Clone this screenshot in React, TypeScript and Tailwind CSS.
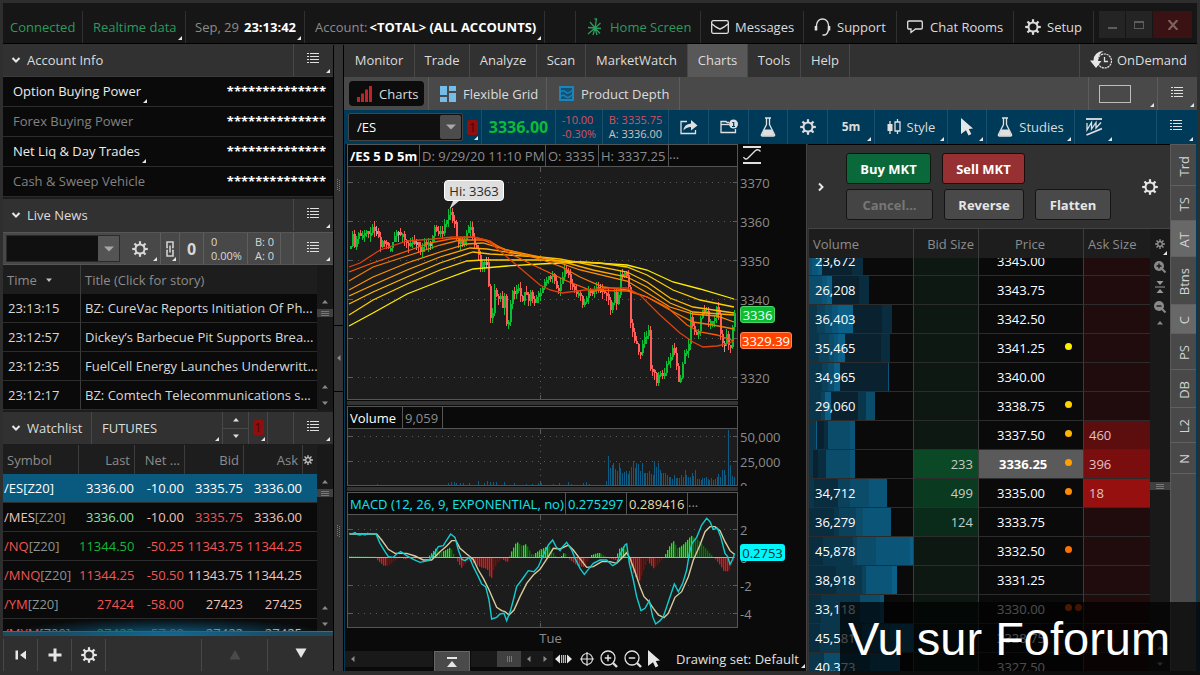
import React from 'react';
import { clsx } from 'clsx';

type Kids = { children?: React.ReactNode; className?: string };

const Corner = ({ className = 'right-[3px] bottom-[3px]' }: { className?: string }) => (
  <svg className={clsx('absolute size-1', className)} viewBox="0 0 4 4" aria-hidden="true">
    <path d="M4 0V4H0Z" fill="#e6e6e6" />
  </svg>
);

const Tri = ({ dir, className = 'text-[#8a8a8a]' }: { dir: 'up' | 'down' | 'left'; className?: string }) => (
  <svg className={clsx('h-1.5 w-2 shrink-0', className)} viewBox="0 0 8 6" fill="currentColor" aria-hidden="true">
    {dir === 'up' && <path d="M4 1L7 4.500H1Z" />}
    {dir === 'down' && <path d="M4 5L7 1.500H1Z" />}
    {dir === 'left' && <path d="M2 3L5.500 0V6Z" />}
  </svg>
);

const Gear = ({ className = 'size-4', hole = 3.6 }: { className?: string; hole?: number }) => (
  <svg className={className} viewBox="0 0 16 16" fill="none" stroke="currentColor" aria-hidden="true">
    <circle cx="8" cy="8" r={hole + 0.9} strokeWidth="2" />
    {[0, 45, 90, 135, 180, 225, 270, 315].map((a) => (
      <path key={a} d="M8 3.200V0.200" strokeWidth="2.200" transform={`rotate(${a} 8 8)`} />
    ))}
  </svg>
);

const ListIcon = () => (
  <svg className="h-2.5 w-3" viewBox="0 0 12 10" fill="#e0e0e0" shapeRendering="crispEdges" aria-hidden="true">
    {[0, 3, 6, 9].map((y) => (
      <g key={y}>
        <rect x="0" y={y} width="2" height="1" />
        <rect x="3" y={y} width="9" height="1" />
      </g>
    ))}
  </svg>
);

const Chevron = ({ className = '' }: { className?: string }) => (
  <svg className={clsx('h-2 w-2.5', className)} viewBox="0 0 10 8" fill="none" stroke="#e6e6e6" strokeWidth="2" aria-hidden="true">
    <path d="M1.500 2L5 5.500L8.500 2" />
  </svg>
);

const Flask = () => (
  <svg className="h-5 w-4" viewBox="0 0 16 20" aria-hidden="true">
    <path d="M5 1H11M6.500 1V7.500L1.500 17.500Q1 19 2.500 19H13.500Q15 19 14.500 17.500L9.500 7.500V1" fill="none" stroke="#e0e0e0" strokeWidth="1.300" />
    <path d="M4.300 12.500H11.700L14.500 18.700H1.500Z" fill="#e0e0e0" />
  </svg>
);

const Pointer = () => (
  <svg className="h-[18px] w-3" viewBox="0 0 12 18" fill="#e6e6e6" aria-hidden="true">
    <path d="M0 0L12 10.500L7.800 11L10.300 16L7.500 17.500L5 12.300L0 16Z" />
  </svg>
);

const Magnifier = ({ plus, className = 'size-[18px]' }: { plus?: boolean; className?: string }) => (
  <svg className={className} viewBox="0 0 18 18" fill="none" stroke="currentColor" aria-hidden="true">
    <circle cx="8" cy="8" r="7" strokeWidth="1.300" />
    <path d="M4.800 8H11.200" strokeWidth="1.500" />
    {plus && <path d="M8 4.800V11.200" strokeWidth="1.500" />}
    <path d="M13 13L17 17" strokeWidth="2.400" />
  </svg>
);

const SolidMagnifier = ({ plus }: { plus?: boolean }) => (
  <svg className="size-3" viewBox="0 0 12 12" aria-hidden="true">
    <circle cx="5" cy="5" r="5" fill="#8a8a8a" />
    <path d="M8 8L11.500 11.500" stroke="#8a8a8a" strokeWidth="2" />
    <path d={plus ? 'M2.500 5H7.500M5 2.500V7.500' : 'M2.500 5H7.500'} stroke="#191919" strokeWidth="1.400" />
  </svg>
);

const LinkBadge = () => (
  <button type="button" aria-label="Link colour 1" className="flex h-[15px] w-[11px] items-center justify-center rounded-xs bg-[#8f0f0f] text-[13px] text-[#4a0606]">
    1
  </button>
);

const MenuCell = ({ className = 'border-[#484848]' }: { className?: string }) => (
  <button type="button" aria-label="Panel menu" className={clsx('relative flex w-10 shrink-0 items-center justify-center border-l pr-0.5 pb-1', className)}>
    <ListIcon />
    <Corner />
  </button>
);

/* ---------- top bar ---------- */

const TopCell = ({ children, className = '' }: Kids) => (
  <div className={clsx('relative flex shrink-0 items-center border-r border-[#303030] whitespace-pre', className)}>{children}</div>
);

function TopBar() {
  return (
    <header className="flex h-[41px] shrink-0 border-b border-black bg-[#161616] pt-2">
      <TopCell className="w-20 pl-[7px] text-[#2b9a5c]">Connected</TopCell>
      <TopCell className="w-[103px] pl-2.5 text-[#2b9a5c]">Realtime data<Corner /></TopCell>
      <TopCell className="w-[119px] gap-[5px] pl-[9px] text-[#8c8c8c]">
        Sep, 29<time className="font-bold text-white">23:13:42</time>
        <Corner />
      </TopCell>
      <TopCell className="w-60 gap-0.5 pl-2.5 text-[#8c8c8c]">
        Account:<b className="font-bold text-white">&lt;TOTAL&gt; (ALL ACCOUNTS)</b>
        <Corner />
      </TopCell>
      <TopCell className="min-w-0 flex-1" />
      <TopCell className="w-[125px] text-[#2b9a5c]">
        <button type="button" className="flex items-center gap-2 pl-[11px]">
          <svg className="h-[18px] w-[15px]" viewBox="0 0 15 18" fill="none" stroke="#2b9a5c" strokeWidth="1.300" aria-hidden="true">
            <path d="M8 10L9.500 1L7.500 1M8 10L3 4M8 10L1 9.500M8 10L1 16M8 10L6 17M8 10L10 17M8 10L13 15.500M8 10L14 10.500M8 10L13.500 5" />
          </svg>
          Home Screen
        </button>
      </TopCell>
      <TopCell className="w-[103px] text-[#dcdcdc]">
        <button type="button" className="flex items-center gap-1.5 pl-2.5">
          <svg className="h-3.5 w-[18px]" viewBox="0 0 18 14" fill="none" stroke="#e0e0e0" strokeWidth="1.300" aria-hidden="true">
            <rect x="0.700" y="0.700" width="16.600" height="12.600" rx="1.500" />
            <path d="M1 4Q5 7.500 9 9.200Q13 7.500 17 4" />
          </svg>
          Messages
        </button>
      </TopCell>
      <TopCell className="w-[93px] text-[#dcdcdc]">
        <button type="button" className="flex items-center gap-1.5 pl-2.5">
          <svg className="h-[18px] w-[17px]" viewBox="0 0 17 18" fill="none" stroke="#e0e0e0" strokeWidth="1.300" aria-hidden="true">
            <path d="M2.500 8V7Q3.500 1 8.500 1T14.500 7V8M8.500 17H11Q13.500 16 14.500 12" />
            <path d="M2 8V12.500M15 8V12.500" strokeWidth="2.600" />
          </svg>
          Support
        </button>
      </TopCell>
      <TopCell className="w-[117px] text-[#dcdcdc]">
        <button type="button" className="flex items-center gap-[7px] pl-2.5">
          <svg className="h-3.5 w-4" viewBox="0 0 16 14" fill="none" stroke="#e0e0e0" strokeWidth="1.300" aria-hidden="true">
            <path d="M2 1H14Q15.300 1 15.300 2.300V7.700Q15.300 9 14 9H8.500L4 12.500V9H2Q0.700 9 0.700 7.700V2.300Q0.700 1 2 1Z" />
          </svg>
          Chat Rooms
        </button>
      </TopCell>
      <TopCell className="w-20 text-[#dcdcdc]">
        <button type="button" className="flex items-center gap-1.5 pl-[11px]">
          <Gear />
          Setup
        </button>
      </TopCell>
      <div className="flex h-[27px] shrink-0 gap-px px-[5px]">
        <button type="button" aria-label="Minimize" className="flex w-[26px] items-center justify-center bg-[#242424]">
          <span className="mt-1.5 h-0.5 w-[9px] bg-[#5c5c5c]" />
        </button>
        <button type="button" aria-label="Maximize" className="flex w-[26px] items-center justify-center bg-[#242424]">
          <span className="h-2 w-2.5 border border-t-2 border-[#5c5c5c]" />
        </button>
        <button type="button" aria-label="Close" className="flex w-[39px] items-center justify-center bg-[#3b1214]">
          <svg className="size-2.5" viewBox="0 0 10 10" stroke="#7c6262" strokeWidth="2.200" aria-hidden="true">
            <path d="M0.500 0L9.500 10M9.500 0L0.500 10" />
          </svg>
        </button>
      </div>
    </header>
  );
}

/* ---------- left column ---------- */

const SectionTitle = ({ children, className = 'flex-1' }: Kids) => (
  <h2 className={clsx('flex items-center', className)}>
    <button type="button" className="flex items-center gap-1.5 pl-2 text-[#dcdcdc]">
      <Chevron />
      {children}
    </button>
  </h2>
);

const accountRows = [
  { name: 'Option Buying Power', active: true },
  { name: 'Forex Buying Power', active: false },
  { name: 'Net Liq & Day Trades', active: true },
  { name: 'Cash & Sweep Vehicle', active: false },
];

const newsRows = [
  ['23:13:15', 'BZ: CureVac Reports Initiation Of Ph...'],
  ['23:12:57', 'Dickey’s Barbecue Pit Supports Brea...'],
  ['23:12:35', 'FuelCell Energy Launches Underwritt...'],
  ['23:12:17', 'BZ: Comtech Telecommunications s...'],
];

const R = 'text-[#f25555]';
const P = 'text-[#efc4bc]';
const W = 'text-white';
const watchRows = [
  { sym: '/ES', symC: W, cells: [['3336.00', W], ['-10.00', W], ['3335.75', W], ['3336.00', W]] },
  { sym: '/MES', symC: P, cells: [['3336.00', 'text-[#8fe0a8]'], ['-10.00', P], ['3335.75', R], ['3336.00', P]] },
  { sym: '/NQ', symC: R, cells: [['11344.50', 'text-[#12b83c]'], ['-50.25', R], ['11343.75', R], ['11344.25', R]] },
  { sym: '/MNQ', symC: R, cells: [['11344.25', R], ['-50.50', R], ['11343.75', P], ['11344.25', P]] },
  { sym: '/YM', symC: R, cells: [['27424', R], ['-58.00', R], ['27423', P], ['27425', P]] },
  { sym: '/MYM', symC: R, cells: [['27422', 'text-[#12b83c]'], ['-57.00', R], ['27422', P], ['27425', P]] },
];

const Scroller = () => (
  <div className="flex w-4 shrink-0 flex-col items-center bg-[#191919] pt-[34px]" aria-hidden="true">
    <Tri dir="up" />
    <div className="mt-1 flex h-2 w-4 flex-col items-center justify-center gap-px bg-[#404040]">
      <span className="h-px w-2 bg-[#777]" />
      <span className="h-px w-2 bg-[#777]" />
      <span className="h-px w-2 bg-[#777]" />
    </div>
    <span className="flex-1" />
    <Tri dir="up" />
    <Tri dir="down" className="mt-2.5 mb-1 text-[#8a8a8a]" />
  </div>
);

function LeftColumn() {
  return (
    <aside className="flex w-[330px] shrink-0 flex-col">
      <section>
        <div className="flex h-[33px] border-b border-[#3c3c3c] bg-[#313131]">
          <SectionTitle>Account Info</SectionTitle>
          <MenuCell />
        </div>
        <dl className="bg-[#0a0a0a]">
          {accountRows.map((r) => (
            <div key={r.name} className="flex h-[30px] items-center justify-between border-b border-[#2c2c2c] pr-[7px] pb-0.5 pl-[9px] whitespace-nowrap">
              <dt className={clsx('relative px-px', r.active ? 'text-[#ececec]' : 'text-[#828282]')}>
                {r.name}
                {r.active && <Corner className="-right-[5px] -bottom-[3px]" />}
              </dt>
              <dd className="font-bold text-white">**************</dd>
            </div>
          ))}
        </dl>
      </section>

      <section className="border-t-2 border-[#1c1c1c]">
        <div className="flex h-[33px] bg-[#313131] pb-px">
          <SectionTitle>Live News</SectionTitle>
          <MenuCell />
        </div>
        <div className="flex h-[33px] border-y border-[#565656] bg-[#484848] text-[#d8d8d8]">
          <div className="my-0.5 ml-[3px] flex w-[114px] border border-[#2a2a2a] bg-[#101010]">
            <input aria-label="News symbol" className="w-[91px] bg-transparent px-1 outline-none" />
            <button type="button" aria-label="Symbol list" className="flex flex-1 items-center justify-center bg-[#545454]">
              <svg className="h-1.5 w-2.5" viewBox="0 0 10 6" fill="#a8a8a8" aria-hidden="true"><path d="M0 0.500H10L5 5.500Z" /></svg>
            </button>
          </div>
          <button type="button" aria-label="News settings" className="relative flex flex-1 items-center justify-center border-r border-[#5e5e5e]">
            <Gear />
            <Corner />
          </button>
          <button type="button" aria-label="Link" className="relative flex w-[19px] items-center justify-center border-r border-[#5e5e5e]">
            <svg className="h-4 w-2" viewBox="0 0 8 16" fill="none" stroke="#d0d0d0" strokeWidth="1.600" aria-hidden="true">
              <path d="M2 6.500H1V1H7V6.500H6M2 9.500H1V15H7V9.500H6M4 4.500V11.500" />
            </svg>
            <Corner />
          </button>
          <div className="flex w-6 items-center justify-center border-r border-[#5e5e5e] text-base font-bold">0</div>
          <div className="w-11 border-r border-[#5e5e5e] pt-0.5 pl-[7px] text-[11px] leading-[14px]">0<br />0.00%</div>
          <div className="w-[33px] border-r border-[#5e5e5e] pt-0.5 pl-[7px] text-[11px] leading-[14px] whitespace-nowrap">B: 0<br />A: 0</div>
          <div className="w-3" />
          <MenuCell className="border-[#5e5e5e]" />
        </div>
        <div className="flex">
          <div className="min-w-0 flex-1">
            <table className="w-full table-fixed border-separate border-spacing-0 bg-[#0a0a0a] text-left">
              <colgroup><col className="w-[78px]" /><col /></colgroup>
              <thead className="bg-[#1d1d1d] text-[#8c8c8c]">
                <tr className="h-[29px]">
                  <th className="border-r border-[#3c3c3c] p-0 pl-1 font-normal">
                    <span className="flex items-center gap-2">Time<Tri dir="down" className="text-[#c0c0c0]" /></span>
                  </th>
                  <th className="p-0 pl-1 font-normal">Title (Click for story)</th>
                </tr>
              </thead>
              <tbody className="text-[#d8d8d8]">
                {newsRows.map(([t, h]) => (
                  <tr key={t} className="h-[29px]">
                    <td className="border-r border-b border-[#2c2c2c] border-r-[#3c3c3c] p-0 pl-[5px]">{t}</td>
                    <td className="border-b border-[#2c2c2c] p-0 pl-1 whitespace-nowrap">{h}</td>
                  </tr>
                ))}
              </tbody>
            </table>
          </div>
          <Scroller />
        </div>
      </section>

      <section className="flex min-h-0 flex-1 flex-col border-t-2 border-[#1c1c1c]">
        <div className="flex h-[33px] shrink-0 border-b border-[#1c1c1c] bg-[#313131]">
          <SectionTitle className="w-[88px]">Watchlist</SectionTitle>
          <button type="button" className="relative flex-1 border-l border-[#484848] pl-2.5 text-left text-[#dcdcdc]">FUTURES<Corner /></button>
          <div className="flex w-[27px] flex-col border-x border-[#484848]">
            <button type="button" aria-label="Previous list" className="flex flex-1 items-center justify-center border-b border-[#484848]"><Tri dir="up" className="text-[#e0e0e0]" /></button>
            <button type="button" aria-label="Next list" className="flex flex-1 items-center justify-center"><Tri dir="down" className="text-[#e0e0e0]" /></button>
          </div>
          <div className="relative flex w-[19px] items-center justify-center border-r border-[#484848] pb-0.5"><LinkBadge /><Corner className="right-0.5 bottom-[3px]" /></div>
          <div className="w-[25px]" />
          <MenuCell />
        </div>
        <div className="flex min-h-0 flex-1 overflow-hidden">
          <div className="min-w-0 flex-1">
            <table className="w-full table-fixed border-separate border-spacing-0 bg-[#0a0a0a] text-right">
              <colgroup>
                <col className="w-[76px]" /><col className="w-14" /><col className="w-[50px]" /><col className="w-[59px]" /><col className="w-[59px]" /><col />
              </colgroup>
              <thead className="bg-[#1d1d1d] text-[#8c8c8c]">
                <tr className="h-[29px]">
                  <th className="border-r border-[#3c3c3c] p-0 pl-1 text-left font-normal">Symbol</th>
                  {['Last', 'Net ...', 'Bid', 'Ask'].map((h) => (
                    <th key={h} className="border-r border-[#3c3c3c] p-0 pr-1 font-normal">{h}</th>
                  ))}
                  <th className="p-0 text-[#c8c8c8]"><Gear className="size-2.5" hole={2.8} /></th>
                </tr>
              </thead>
              <tbody>
                {watchRows.map((r, i) => (
                  <tr key={r.sym} className={clsx('h-[29px]', i === 0 && 'bg-[#0a5a80]')}>
                    <td className={clsx('border-b border-[#2c2c2c] p-0 pl-px text-left', r.symC)}>
                      {r.sym}<span className={i === 0 ? 'text-white' : 'text-[#8c9490]'}>[Z20]</span>
                    </td>
                    {r.cells.map(([v, c], k) => (
                      <td key={k} className={clsx('border-b border-[#2c2c2c] p-0 pr-px', c)}>{v}</td>
                    ))}
                    <td className="border-b border-[#2c2c2c] p-0" />
                  </tr>
                ))}
              </tbody>
            </table>
          </div>
          <Scroller />
        </div>
        <div className="relative h-[5px] shrink-0 border-t border-[#4a6a78] bg-[#1f4a5e]">
          <div className="absolute inset-x-0 bottom-0 h-[18px] bg-[radial-gradient(ellipse_50%_100%_at_50%_100%,rgba(14,110,155,0.9),rgba(14,80,115,0.35)_70%,transparent)]" />
        </div>
        <div className="flex h-[35px] shrink-0 bg-[#2f2f2f] pt-[3px]">
          <button type="button" aria-label="First" className="flex w-[34px] items-center justify-center border-l border-[#484848]">
            <svg className="h-2.5 w-3" viewBox="0 0 12 10" fill="#e6e6e6" aria-hidden="true"><path d="M0.500 0.500H3V9.500H0.500ZM11 0.500V9.500L5 5Z" /></svg>
          </button>
          <button type="button" aria-label="Add" className="flex w-[34px] items-center justify-center border-l border-[#484848]">
            <svg className="size-3.5" viewBox="0 0 14 14" fill="#e6e6e6" aria-hidden="true"><path d="M5.500 0.500H8.500V5.500H13.500V8.500H8.500V13.500H5.500V8.500H0.500V5.500H5.500Z" /></svg>
          </button>
          <button type="button" aria-label="Settings" className="flex w-[35px] items-center justify-center border-x border-[#484848] text-[#e6e6e6]"><Gear className="size-4" /></button>
          <span className="flex-1" />
          <button type="button" aria-label="Up" className="flex w-[66px] items-center justify-center border-l border-[#484848]">
            <svg className="h-2.5 w-3" viewBox="0 0 12 10" fill="#4a4a4a" aria-hidden="true"><path d="M6 0L11.500 9.500H0.500Z" /></svg>
          </button>
          <button type="button" aria-label="Down" className="flex w-[66px] items-center justify-center border-l border-[#484848] pb-1">
            <svg className="h-2.5 w-3" viewBox="0 0 12 10" fill="#e6e6e6" aria-hidden="true"><path d="M6 10L11.500 0.500H0.500Z" /></svg>
          </button>
        </div>
      </section>
    </aside>
  );
}

const Grip = () => (
  <svg className="h-3 w-1" viewBox="0 0 4 12" fill="#777" shapeRendering="crispEdges" aria-hidden="true">
    {[0, 2, 4, 6, 8, 10].map((y) => (
      <g key={y}><rect x="0" y={y} width="1" height="1" /><rect x="2" y={y + 1} width="1" height="1" /></g>
    ))}
  </svg>
);

const Divider = () => (
  <div className="mt-px flex w-[11px] shrink-0 flex-col border-x border-black bg-[#333]">
    <div className="flex flex-1 items-center justify-center"><Grip /></div>
    <button type="button" aria-label="Collapse sidebar" className="flex h-[67px] items-center justify-center border-y border-black"><Tri dir="left" /></button>
    <div className="flex flex-1 items-center justify-center"><Grip /></div>
  </div>
);

/* ---------- charts ---------- */

const priceAnchors: [number, number][] = [
  [350, 243], [352, 237], [354, 247], [358, 233], [363, 238], [365, 230], [369, 232], [373, 228], [377, 229], [379, 246], [383, 240], [387, 246], [390, 248], [393, 238], [397, 233], [401, 235], [405, 244], [410, 242], [415, 243], [420, 249], [423, 242], [427, 243], [431, 240], [434, 229], [438, 231], [442, 233], [445, 223], [447, 222], [449, 211], [451, 217], [454, 222], [455, 235], [457, 242], [461, 240], [462, 247], [466, 235], [468, 229], [471, 230], [473, 243], [475, 253], [477, 247], [479, 268], [483, 262], [486, 263], [488, 287], [490, 318], [492, 315], [493, 291], [497, 300], [499, 293], [502, 307], [504, 298], [506, 327], [507, 326], [509, 316], [511, 292], [515, 296], [517, 286], [522, 302], [525, 287], [528, 299], [531, 292], [533, 305], [535, 298], [537, 292], [542, 290], [545, 282], [548, 277], [551, 273], [554, 283], [557, 291], [561, 283], [563, 271], [565, 266], [567, 273], [571, 286], [575, 295], [579, 293], [583, 306], [587, 292], [591, 288], [595, 293], [597, 286], [601, 292], [604, 290], [608, 300], [611, 312], [613, 291], [617, 308], [619, 278], [623, 272], [625, 271], [628, 287], [629, 317], [633, 335], [637, 350], [641, 351], [643, 332], [645, 340], [648, 328], [649, 365], [651, 379], [653, 366], [656, 383], [659, 368], [663, 379], [667, 360], [670, 357], [673, 348], [675, 357], [677, 378], [679, 386], [681, 367], [684, 353], [688, 347], [690, 316], [693, 328], [697, 335], [700, 320], [703, 306], [706, 312], [709, 322], [713, 319], [717, 307], [719, 327], [723, 347], [727, 332], [729, 357], [731, 340], [733, 313], [735, 318],
];

function sample(pts: [number, number][], x: number) {
  for (let i = 1; i < pts.length; i++) {
    const [x0, y0] = pts[i - 1];
    const [x1, y1] = pts[i];
    if (x <= x1) return y0 + ((y1 - y0) * (x - x0)) / (x1 - x0 || 1);
  }
  return pts[pts.length - 1][1];
}

const noise = (n: number) => {
  const v = Math.sin(n * 12.9898) * 43758.5453;
  return v - Math.floor(v);
};

const candles = Array.from({ length: 193 }, (_, i) => {
  const x = 350 + i * 2;
  const open = Math.round(sample(priceAnchors, x - 2) + (noise(i) - 0.5) * 6);
  const close = Math.round(sample(priceAnchors, x) + (noise(i + 1) - 0.5) * 6);
  const top = Math.min(open, close);
  const h = Math.max(3, Math.abs(open - close));
  const fill = Math.abs(open - close) < 1 && noise(i + 7) > 0.5 ? '#a8a8a8' : close > open ? '#ff5c5c' : '#0cbc32';
  return { x, top, h, fill, hi: top - Math.round(noise(i * 3) * 6), lo: top + h + Math.round(noise(i * 5 + 2) * 7) };
});

const averages: [string, string][] = [
  ['#ffee00', '349,326 373,313 407,294 440,281 473,269 507,266 540,264 580,262 627,265 647,270 673,282 700,289 734,299'],
  ['#ffd000', '349,315 373,300 407,284 440,270 467,261 483,260 540,260 600,263 627,267 647,275 673,290 700,300 734,307'],
  ['#ffbe00', '349,304 373,292 407,277 440,263 473,252 490,254 540,257 560,259 627,272 647,282 670,298 693,307 734,313'],
  ['#ffa800', '349,296 373,285 407,270 440,257 470,248 487,249 513,253 560,261 593,270 627,277 647,287 670,303 693,312 734,315'],
  ['#ff9000', '349,290 373,277 407,263 440,252 467,244 483,243 507,250 540,257 563,264 580,270 627,281 647,293 670,307 693,314 717,316 734,322'],
  ['#f57a00', '349,281 373,267 407,256 440,245 460,240 483,240 507,250 540,259 562,267 580,277 603,287 627,290 647,297 670,310 693,322 713,325 734,329'],
  ['#ff5a00', '349,272 370,264 390,257 413,249 430,243 450,239 473,237 490,241 507,252 533,265 567,281 590,290 627,291 647,297 667,307 687,325 700,332 717,335 734,341'],
  ['#e0400c', '349,267 360,263 380,250 407,241 433,239 453,237 473,237 487,240 507,257 520,268 540,285 550,290 562,293 585,290 612,288 627,288 640,295 660,315 680,333 693,342 703,347 717,346 726,344 734,341'],
];

const Grid = ({ ys, x0, x1, y0, y1, vx, u }: { ys: number[]; x0: number; x1: number; y0: number; y1: number; vx: number; u: number }) => (
  <g stroke="#5a5a5a" strokeWidth={u} shapeRendering="crispEdges">
    {ys.map((y) => (
      <g key={y}>
        <path d={`M${x0} ${y}H${x0 + 5 * u}M${x1 - 4 * u} ${y}H${x1}`} />
        <path d={`M${x0 + 10 * u} ${y}H${x1 - 5 * u}`} strokeDasharray={`${u} ${5 * u}`} />
      </g>
    ))}
    <path d={`M${vx} ${y0}V${y0 + 5 * u}M${vx} ${y1 - 4 * u}V${y1}`} />
    <path d={`M${vx} ${y0 + 10 * u}V${y1 - 5 * u}`} strokeDasharray={`${u} ${5 * u}`} />
  </g>
);

const PriceChart = () => (
  <svg className="absolute inset-0 size-full" viewBox="348 167 389 232" preserveAspectRatio="none" role="img" aria-label="/ES price">
    <Grid ys={[182.5, 221.5, 260.5, 299.5, 338.5, 377.5]} x0={348} x1={737} y0={167} y1={399} vx={540.5} u={1} />
    <g shapeRendering="crispEdges">
      {candles.map((c) => (
        <g key={c.x} fill={c.fill}>
          <rect x={c.x} y={c.hi} width="1" height={c.lo - c.hi} />
          <rect x={c.x} y={c.top} width="2" height={c.h} />
        </g>
      ))}
    </g>
    {averages.map(([c, p]) => (
      <polyline key={c} points={p} fill="none" stroke={c} strokeWidth="1.300" />
    ))}
  </svg>
);

const volumes = [29, 17, 20, 22, 16, 14, 22, 17, 12, 13, 14, 11, 14, 18, 24, 17, 22, 21, 14, 22, 12, 12, 12, 14, 11, 10, 24, 18, 22, 15, 12, 12, 12, 10, 8, 8, 6, 10, 7, 7, 7, 10, 8, 15, 10, 8, 8, 12, 9, 15, 6, 6, 5, 7, 7, 8, 6, 5, 7, 5, 6, 8, 11, 8, 15, 15, 10];
const volumeBars: [number, number][] = [
  ...Array.from({ length: 48 }, (_, i): [number, number] => [448 + i * 3, noise(i + 40) > 0.35 ? 1 + Math.round(noise(i * 2 + 9) * 2) : 0]),
  [377, 1], [478, 4], [487, 4], [493, 3], [504, 3], [456, 2], [540, 2], [606, 4],
  ...volumes.map((v, i): [number, number] => [608 + Math.round(i * 1.78), v]),
  [728, 55], [730, 20], [732, 9], [734, 8],
];

const VolumeChart = () => (
  <svg className="absolute inset-0 size-full" viewBox="348 429 389 56" preserveAspectRatio="none" role="img" aria-label="Volume">
    <Grid ys={[436.5, 461.5]} x0={348} x1={737} y0={429} y1={485} vx={540.5} u={1} />
    <g fill="#0d5b82" shapeRendering="crispEdges">
      {volumeBars.map(([x, h], i) => <rect key={i} x={x} y={485 - h} width="1" height={h} />)}
    </g>
  </svg>
);

const hist: [number, number][] = [
  [28, 4], [60, 3], [105, 2], [110, -8], [130, -26], [145, -24], [165, -8], [178, 3], [190, -6], [230, -5], [262, 0], [285, 26], [300, 14], [330, 30], [345, -2], [362, -32], [385, -10], [400, -18], [420, -30], [440, -35], [451, -70], [458, -40], [472, -14], [485, -5], [500, -16], [508, 8], [528, 47], [545, 34], [557, 40], [575, 6], [595, 20], [625, 36], [650, -4], [660, 0], [672, 16], [685, -5], [710, -25], [733, -30], [750, 6], [775, 14], [805, -3], [825, -8], [835, 25], [852, 35], [865, -15], [882, -55], [895, -75], [905, -50], [920, -10], [940, -34], [970, 0], [985, 30], [998, 50], [1012, 26], [1030, 40], [1052, 65], [1075, 50], [1110, 10], [1125, -6], [1140, -25], [1150, -42], [1165, -42], [1180, -8],
];
const histBars = Array.from({ length: 193 }, (_, i) => {
  const x = 27 + i * 6;
  const v = sample(hist, x);
  const grow = Math.abs(v) >= Math.abs(sample(hist, x - 6));
  const tone = v > 0 ? (grow ? 'fill-[#00ff00]' : 'fill-[#007a00]') : grow ? 'fill-[#ff0a0a]' : 'fill-[#8c0606]';
  return { x, v, tone };
});

const macdLine = '28,400 36,402 45,398 53,404 60,405 68,402 75,405 83,400 90,403 98,401 108,402 120,430 135,455 145,470 160,472 170,462 182,455 200,467 220,478 240,487 265,482 280,465 295,440 310,437 320,420 332,402 345,412 355,450 365,478 375,482 388,472 400,500 415,530 425,552 437,560 447,600 455,657 470,652 480,642 492,640 500,662 512,630 520,600 530,560 545,540 565,512 582,515 595,500 610,465 625,435 638,420 648,440 660,452 668,440 680,427 695,450 705,475 720,505 733,523 745,508 760,490 780,480 800,480 818,497 830,490 842,460 855,435 860,432 868,490 880,540 890,590 903,632 915,625 928,602 938,650 947,672 960,662 970,650 980,620 990,590 1003,552 1015,575 1028,550 1040,510 1048,460 1056,430 1070,412 1085,375 1100,355 1110,365 1120,388 1132,385 1142,410 1155,460 1163,470 1170,493 1178,478 1184,460';
const signalLine = '28,402 110,402 125,420 145,448 165,460 200,460 225,468 250,480 275,480 300,455 320,438 335,422 348,422 360,445 380,462 400,478 415,510 430,535 445,565 458,595 470,622 485,632 495,635 507,645 522,630 540,590 560,550 580,525 600,508 625,470 640,445 660,447 685,435 700,450 715,470 740,502 760,500 785,485 810,485 830,490 845,475 860,458 870,475 885,515 900,560 912,590 925,603 940,625 955,645 972,653 985,640 1005,592 1025,575 1045,530 1060,480 1080,435 1095,395 1110,380 1125,380 1140,392 1155,425 1170,452 1182,462';

const MacdChart = () => (
  <svg className="absolute inset-0 size-full" viewBox="24 345 1167 336" preserveAspectRatio="none" role="img" aria-label="MACD">
    <Grid ys={[388.5, 556.5, 640.5]} x0={24} x1={1191} y0={345} y1={681} vx={601.5} u={3} />
    {histBars.map((b) => (
      <rect key={b.x} x={b.x} y={b.v > 0 ? 472 - b.v : 472} width="4" height={Math.abs(b.v)} className={b.tone} />
    ))}
    <path d="M27 472.500H1184" stroke="#f080f0" strokeWidth="3" />
    <polyline points={signalLine} fill="none" stroke="#d8cc9c" strokeWidth="4.200" />
    <polyline points={macdLine} fill="none" stroke="#12cdd0" strokeWidth="4.200" />
  </svg>
);

const HeadCell = ({ children, className = '' }: Kids) => (
  <span className={clsx('flex shrink-0 items-center border-r border-[#555] pl-0.5 whitespace-nowrap', className)}>{children}</span>
);

const ChartHead = ({ children }: Kids) => (
  <div className="flex h-[22px] shrink-0 border-b border-[#555] bg-[#0a0a0a] text-[#8c8c8c]">{children}</div>
);

const Splitter = () => <div className="my-px h-1 w-[391px] max-w-full bg-[#333]" />;

function ChartPanel() {
  return (
    <div className="flex min-w-0 flex-1 flex-col bg-[#0a0a0a]">
      <div className="flex min-h-0 flex-1 pl-0.5">
        <div className="flex min-w-0 flex-1 flex-col border border-[#555] bg-[#1c1c1c]">
          <ChartHead>
            <HeadCell className="w-[72px] font-bold text-white">/ES 5 D 5m</HeadCell>
            <HeadCell className="w-[126px]">D: 9/29/20 11:10 PM</HeadCell>
            <HeadCell className="w-[53px]">O: 3335</HeadCell>
            <HeadCell className="w-[70px]">H: 3337.25</HeadCell>
            <span>...</span>
          </ChartHead>
          <div className="relative min-h-0 flex-1">
            <PriceChart />
            <div className="absolute top-[13px] left-24 flex h-[21px] w-[60px] items-center justify-center rounded-sm border border-white bg-[#dedede] text-[#2a2a2a]">
              Hi: 3363
              <svg className="absolute top-5 left-1 h-2 w-3" viewBox="0 0 12 8" aria-hidden="true"><path d="M4 0H10L0.500 8Z" fill="#dedede" /></svg>
            </div>
          </div>
        </div>
        <div className="relative w-[68px] shrink-0 pl-0.5 text-[#8c8c8c]">
          <button type="button" aria-label="Scale" className="flex h-5 items-end pl-[3px]">
            <svg className="h-[18px] w-[18px]" viewBox="0 0 18 18" fill="none" stroke="#e0e0e0" aria-hidden="true">
              <path d="M0 1H18M0 17H18" strokeWidth="2" />
              <path d="M0.500 11Q2.500 14.500 5 12L12 5Q15 2.500 17.500 5.500" strokeWidth="1.400" />
            </svg>
          </button>
          {['3370', '3360', '3350', '3340', '', '3320'].map((l, i) => (
            <div key={i} className="h-[39px] leading-[39px]">{l}</div>
          ))}
          <output className="absolute top-[162px] left-0.5 flex h-[17px] w-[35px] items-center justify-center rounded-[3px] border border-[#4fd46a] bg-[#0cbc32] text-white">3336</output>
          <output className="absolute top-[188px] left-0.5 flex h-[17px] w-[52px] items-center justify-center rounded-[3px] border border-[#ff8a5c] bg-[#ff4400] text-white">3329.39</output>
        </div>
      </div>
      <div className="pr-[68px] pl-0.5"><Splitter /></div>
      <div className="flex h-20 shrink-0 pl-0.5">
        <div className="flex min-w-0 flex-1 flex-col border border-[#555] bg-[#1c1c1c]">
          <ChartHead>
            <HeadCell className="w-[55px] text-white">Volume</HeadCell>
            <HeadCell className="w-10">9,059</HeadCell>
          </ChartHead>
          <div className="relative min-h-0 flex-1"><VolumeChart /></div>
        </div>
        <div className="w-[68px] shrink-0 overflow-hidden pt-[19px] pl-0.5 text-[#8c8c8c]">
          {['50,000', '25,000', '0'].map((l) => <div key={l} className="h-[25px] leading-[25px]">{l}</div>)}
        </div>
      </div>
      <div className="pr-[68px] pl-0.5"><Splitter /></div>
      <div className="flex h-[136px] shrink-0 pl-0.5">
        <div className="flex min-w-0 flex-1 flex-col border border-[#555] bg-[#1c1c1c]">
          <ChartHead>
            <HeadCell className="w-[218px] text-[#14e4ea]">MACD (12, 26, 9, EXPONENTIAL, no)</HeadCell>
            <HeadCell className="w-[61px] text-[#14e4ea]">0.275297</HeadCell>
            <HeadCell className="w-[61px] text-[#e6dcae]">0.289416</HeadCell>
            <span>...</span>
          </ChartHead>
          <div className="relative min-h-0 flex-1"><MacdChart /></div>
        </div>
        <div className="relative w-[68px] shrink-0 pt-6 pl-0.5 text-[#8c8c8c]">
          {['2', '0', '-2', '-4'].map((l) => <div key={l} className="h-7 leading-7">{l}</div>)}
          <output className="absolute top-[52px] left-0.5 flex h-[17px] w-[45px] items-center justify-center rounded-[3px] bg-[#00f6fa] text-[#0a2a2c]">0.2753</output>
        </div>
      </div>
      <div className="flex h-[23px] shrink-0 items-center justify-center pr-[50px] pb-1 text-[#8c8c8c]">Tue</div>
      <div className="flex h-5 shrink-0">
        <div className="flex h-4 min-w-0 flex-1 items-center bg-[#191919] pl-1"><Tri dir="left" /></div>
        <button type="button" aria-label="Expand drawer" className="mx-px flex w-9 flex-col items-center justify-center gap-0.5 border border-b-0 border-[#666] bg-[#4a4a4a]">
          <span className="h-0.5 w-2.5 bg-[#e6e6e6]" />
          <svg className="h-1.5 w-2.5" viewBox="0 0 10 6" fill="#e6e6e6" aria-hidden="true"><path d="M5 0L10 6H0Z" /></svg>
        </button>
        <div className="flex h-4 w-[82px] items-center bg-[#191919] pl-[26px]">
          <div className="mr-1 flex h-4 w-6 items-center justify-center gap-px bg-[#404040]">
            <span className="h-1.5 w-px bg-[#777]" /><span className="h-1.5 w-px bg-[#777]" /><span className="h-1.5 w-px bg-[#777]" />
          </div>
          <Tri dir="left" />
          <Tri dir="left" className="ml-2 rotate-180 text-[#8a8a8a]" />
        </div>
        <div className="flex h-4 w-[253px] items-center gap-1.5 pl-0.5 text-[#e0e0e0]">
          <svg className="h-3 w-[17px]" viewBox="0 0 17 12" fill="#e6e6e6" aria-hidden="true"><path d="M0 6L5 1.500V10.500ZM17 6L12 1.500V10.500ZM6.200 2H7.200V10H6.200ZM8.200 2H9.200V10H8.200ZM10.200 2H11V10H10.200Z" /></svg>
          <svg className="ml-0.5 size-3.5" viewBox="0 0 14 14" fill="none" stroke="#e0e0e0" strokeWidth="1.200" aria-hidden="true"><circle cx="7" cy="7" r="5.500" /><path d="M7 0V14M0 7H14" /></svg>
          <Magnifier plus />
          <Magnifier />
          <Pointer />
          <button type="button" className="relative ml-2.5 pr-1.5 whitespace-nowrap">Drawing set: Default<Corner className="right-0 bottom-0" /></button>
        </div>
      </div>
    </div>
  );
}

/* ---------- active trader ---------- */

const c1 = '#0a222f';
const c2 = '#0a2c3f';
const c3 = '#0a364b';
const c4 = '#0b415b';
const c5 = '#0b4c6b';
const c6 = '#0b5678';
const c7 = '#0c6088';

type Ladder = { vol: string; bars: [number, string][]; bid?: [string, string]; price: string; dots?: string[]; ask?: [string, string] };

const ladder: Ladder[] = [
  { vol: '23,672', bars: [[3, c5], [6, c6], [4, c7], [30, c1], [11, c2]], price: '3345.00' },
  { vol: '26,208', bars: [[7, c5], [6, c5], [5, c6], [5, c7], [27, c1], [10, c2]], price: '3343.75' },
  { vol: '36,403', bars: [[8, c3], [8, c4], [7, c5], [6, c6], [15, c7], [29, c1], [10, c2]], price: '3342.50' },
  { vol: '35,465', bars: [[10, c3], [10, c4], [5, c5], [4, c6], [7, c7], [36, c1], [9, c2]], price: '3341.25', dots: ['#ffee00'] },
  { vol: '34,965', bars: [[13, c3], [6, c4], [6, c5], [6, c7], [48, c1], [1, c6]], price: '3340.00' },
  { vol: '29,060', bars: [[12, c3], [4, c4], [6, c7], [27, c1], [8, c3], [9, c5]], price: '3338.75', dots: ['#ffd400'] },
  { vol: '', bars: [[7, c3], [1, c7], [7, c1], [4, c2], [22, c5], [5, c6]], price: '3337.50', dots: ['#ffb400'], ask: ['460', 'bg-[#5c0d0d]'] },
  { vol: '', bars: [[4, c3], [5, c1], [8, c2], [24, c5], [5, c6]], bid: ['233', 'bg-[#0a4826]'], price: '3336.25', dots: ['#ffa000'], ask: ['396', 'bg-[#7a0d0d]'] },
  { vol: '34,712', bars: [[5, c3], [24, c2], [12, c4], [19, c5], [18, c6]], bid: ['499', 'bg-[#0a3a20]'], price: '3335.00', dots: ['#ff8c00'], ask: ['18', 'bg-[#961010]'] },
  { vol: '36,279', bars: [[25, c2], [5, c3], [17, c4], [7, c5], [28, c6]], bid: ['124', 'bg-[#0a2b1a]'], price: '3333.75' },
  { vol: '45,878', bars: [[14, c2], [30, c3], [4, c4], [19, c5], [34, c6], [3, c7]], price: '3332.50', dots: ['#ff7000'] },
  { vol: '38,918', bars: [[27, c2], [26, c3], [4, c4], [26, c6], [5, c7]], price: '3331.25' },
  { vol: '33,118', bars: [[12, c2], [39, c3], [20, c5], [4, c6]], price: '3330.00', dots: ['#ff5200', '#e04000'] },
  { vol: '45,581', bars: [[11, c2], [42, c3], [28, c5], [23, c6]], price: '3328.75' },
  { vol: '40,373', bars: [[15, c3], [16, c5], [30, c4], [30, c6]], price: '3327.50' },
];

const ladderCell = 'border-b border-[#2c2c2c] p-0';
const cols = (
  <colgroup><col className="w-[105px]" /><col className="w-[65px]" /><col className="w-[105px]" /><col /></colgroup>
);

const TradeButton = ({ children, className = '' }: Kids) => (
  <button type="button" className={clsx('h-[31px] rounded-[3px] border font-bold', className)}>{children}</button>
);

function ActiveTrader() {
  return (
    <section className="flex w-[364px] shrink-0 flex-col border-l border-[#444] pl-px">
      <div className="flex h-[85px] shrink-0 items-center border-y border-[#444] border-t-black bg-[#313131]">
        <button type="button" aria-label="Collapse" className="flex w-[26px] justify-center"><Chevron className="-rotate-90" /></button>
        <div className="ml-3 flex flex-1 flex-col gap-[5px]">
          <div className="flex gap-[11px]">
            <TradeButton className="w-[85px] border-[#10170f] bg-[#0a693b] text-white">Buy MKT</TradeButton>
            <TradeButton className="w-[83px] border-[#1c0c0c] bg-[#963032] text-white">Sell MKT</TradeButton>
          </div>
          <div className="flex gap-[11px]">
            <TradeButton className="w-[87px] border-[#141414] bg-[#444] text-[#777]">Cancel...</TradeButton>
            <TradeButton className="w-20 border-[#141414] bg-[#494949] text-[#e6e6e6]">Reverse</TradeButton>
            <TradeButton className="w-[76px] border-[#141414] bg-[#494949] text-[#e6e6e6]">Flatten</TradeButton>
          </div>
        </div>
        <button type="button" aria-label="Trader settings" className="mr-3 text-[#e6e6e6]"><Gear /></button>
      </div>
      <div className="flex min-h-0 flex-1 border-l border-[#333] bg-[#0a0a0a]">
        <div className="flex min-w-0 flex-1 flex-col overflow-hidden">
          <table className="relative z-10 w-full shrink-0 table-fixed border-separate border-spacing-0 bg-[#1d1d1d] text-[#8c8c8c]">
            {cols}
            <thead>
              <tr className="h-[29px]">
                <th className="border-r border-[#3c3c3c] p-0 pl-1 text-left font-normal">Volume</th>
                <th className="border-r border-[#3c3c3c] p-0 pr-1 text-right font-normal whitespace-nowrap">Bid Size</th>
                <th className="border-r border-[#3c3c3c] p-0 pr-[38px] text-right font-normal">Price</th>
                <th className="p-0 pl-1 text-left font-normal whitespace-nowrap">Ask Size</th>
              </tr>
            </thead>
          </table>
          <table aria-label="Price ladder" className="-mt-[11px] w-full shrink-0 table-fixed border-separate border-spacing-0">
            {cols}
            <tbody>
              {ladder.map((r) => {
                const last = r.price === '3336.25';
                return (
                  <tr key={r.price} className="h-[29px]">
                    <td className={clsx(ladderCell, 'relative border-r border-r-[#3c3c3c] pl-1.5 text-white')}>
                      <div className="absolute inset-0 flex" aria-hidden="true">
                        {r.bars.map(([w, c], i) => <span key={i} style={{ width: w, background: c }} />)}
                      </div>
                      <span className="relative">{r.vol}</span>
                    </td>
                    <td className={clsx(ladderCell, 'border-r border-r-[#3c3c3c] pr-[5px] text-right text-[#c4ccc6]', r.bid ? r.bid[1] : 'bg-[#0c1811]')}>{r.bid?.[0]}</td>
                    <td className={clsx(ladderCell, 'border-r border-r-[#3c3c3c] text-white', last && 'bg-[#5a5a5a] font-bold')}>
                      <div className="flex items-center">
                        <span className={clsx('w-[66px]', last ? 'pl-5 text-left' : 'text-right')}>{r.price}</span>
                        <span className="mb-1 ml-5 flex gap-[3px]">
                          {r.dots?.map((c) => <i key={c} className="size-[7px] rounded-full" style={{ background: c }} />)}
                        </span>
                      </div>
                    </td>
                    <td className={clsx(ladderCell, 'pl-[5px] text-[#e0c4c4]', r.ask ? r.ask[1] : 'bg-[#200b0d]')}>{r.ask?.[0]}</td>
                  </tr>
                );
              })}
            </tbody>
          </table>
        </div>
        <div className="relative flex w-5 shrink-0 flex-col items-center bg-[#191919] pt-2.5 text-[#9a9a9a]">
          <Gear className="size-2.5" hole={2.8} />
          <Corner className="top-[22px] right-[3px]" />
          <span className="mt-3 flex flex-col items-center gap-[7px]">
            <SolidMagnifier plus />
            <svg className="h-3.5 w-2.5" viewBox="0 0 10 14" fill="#9a9a9a" aria-hidden="true"><path d="M1.500 1H8.500L5 5ZM0 6.500H10V7.500H0ZM1.500 13H8.500L5 9Z" /></svg>
            <SolidMagnifier />
            <Tri dir="up" />
          </span>
          <div className="mt-[156px] flex h-2 w-full flex-col items-center justify-center gap-px bg-[#404040]">
            <span className="h-px w-2 bg-[#777]" /><span className="h-px w-2 bg-[#777]" /><span className="h-px w-2 bg-[#777]" />
          </div>
          <span className="flex-1" />
          <Tri dir="up" />
          <Tri dir="down" className="mt-2.5 mb-1 text-[#8a8a8a]" />
        </div>
      </div>
    </section>
  );
}

const sideTabs: [string, string][] = [
  ['Trd', 'h-[41px]'],
  ['TS', 'h-[35px]'],
  ['AT', 'h-9 bg-[#686868]'],
  ['Btns', 'h-12'],
  ['C', 'h-[29px] bg-[#686868]'],
  ['PS', 'h-9'],
  ['DB', 'h-[38px]'],
  ['L2', 'h-[35px]'],
  ['N', 'h-[31px]'],
];

const SideTabs = () => (
  <nav className="flex w-[26px] shrink-0 flex-col border-t border-l border-[#5a5a5a] bg-[#494949] text-[#d4d4d4]">
    {sideTabs.map(([t, c]) => (
      <button key={t} type="button" className={clsx('flex items-center justify-center border-b border-[#606060] pt-0.5', c)}>
        <span className="rotate-180 [writing-mode:vertical-rl]">{t}</span>
      </button>
    ))}
  </nav>
);

/* ---------- main area ---------- */

const mainTabs: [string, string][] = [
  ['Monitor', 'w-[71px]'], ['Trade', 'w-[55px]'], ['Analyze', 'w-[67px]'], ['Scan', 'w-[49px]'],
  ['MarketWatch', 'w-[102px]'], ['Charts', 'w-[60px] bg-[#585858]'], ['Tools', 'w-[53px]'], ['Help', 'w-[49px]'],
];

const ToolCell = ({ children, className = '' }: Kids) => (
  <div className={clsx('relative flex shrink-0 items-center justify-center gap-1.5 border-r border-[#1b4f6e] text-[#dcdcdc]', className)}>{children}</div>
);

function MainArea() {
  return (
    <main className="flex min-w-0 flex-1 flex-col">
      <nav className="flex h-[33px] shrink-0 bg-[#313131] text-[#dcdcdc]">
        {mainTabs.map(([t, c]) => (
          <button key={t} type="button" className={clsx('shrink-0 border-r border-[#484848] pb-0.5', c)}>{t}</button>
        ))}
        <span className="flex-1" />
        <button type="button" className="flex w-[118px] items-center justify-end gap-[5px] border-l border-[#484848] pr-2.5 pb-0.5">
          <svg className="h-[18px] w-[22px]" viewBox="0 0 22 18" fill="none" aria-hidden="true">
            <circle cx="14.500" cy="10" r="7" stroke="#e0e0e0" strokeWidth="1.200" strokeDasharray="2.200 0.700" />
            <path d="M14.500 6V10.500H18" stroke="#e0e0e0" strokeWidth="1.300" />
            <path d="M13.500 0Q4 0.500 3.500 9.500H0L6 17L11.500 10H8Q8 3 13.500 0Z" fill="#e6e6e6" />
          </svg>
          OnDemand
        </button>
      </nav>
      <nav className="flex h-[33px] shrink-0 bg-[#494949] text-[#dcdcdc]">
        <div className="flex w-[85px] items-center border-r border-[#5c5c5c] pl-[5px]">
          <button type="button" className="flex h-[25px] w-[75px] items-center gap-[7px] rounded bg-[#0c0c0c] pl-2">
            <svg className="h-4 w-[15px]" viewBox="0 0 15 16" fill="#c02428" aria-hidden="true"><path d="M0 11H3V16H0ZM4 7.500H7V16H4ZM8 3.500H11V16H8ZM12 0H15V16H12Z" /></svg>
            Charts
          </button>
        </div>
        <button type="button" className="flex w-[118px] items-center gap-[7px] border-r border-[#5c5c5c] pl-[11px]">
          <svg className="size-4" viewBox="0 0 16 16" fill="#76bce8" aria-hidden="true"><path d="M0 0H7V9H0ZM9 0H16V5H9ZM0 11H7V16H0ZM9 7H16V16H9Z" /></svg>
          Flexible Grid
        </button>
        <button type="button" className="flex w-[133px] items-center gap-[7px] border-r border-[#5c5c5c] pl-3">
          <svg className="size-[15px]" viewBox="0 0 15 15" fill="none" stroke="#1a84bc" aria-hidden="true"><rect x="1" y="1" width="13" height="13" strokeWidth="2" fill="#135275" /><path d="M2 6Q4 3.500 6.500 6T13 4.500M2 10.500Q4 8 6.500 10.500T13 9" strokeWidth="1.300" /></svg>
          Product Depth
        </button>
        <span className="flex-1" />
        <button type="button" aria-label="Grid layout" className="relative w-[69px] border-l border-[#5c5c5c] pl-2.5">
          <span className="block h-[18px] w-8 border border-[#bdbdbd]" />
          <Corner />
        </button>
        <MenuCell className="border-[#5c5c5c]" />
      </nav>
      <div className="flex min-h-0 flex-1 flex-col border-x border-[#003a59]">
        <div className="flex h-[34px] shrink-0 bg-[#003a59]">
          <ToolCell className="w-[137px]">
            <div className="flex h-7 w-[115px] rounded-xs border border-[#454545] bg-[#101010]">
              <input aria-label="Symbol" defaultValue="/ES" className="w-[91px] bg-transparent pl-2 text-white outline-none" />
              <button type="button" aria-label="Symbol list" className="my-px mr-px flex flex-1 items-center justify-center rounded-xs bg-[#4c4c4c]">
                <svg className="h-1.5 w-2.5" viewBox="0 0 10 6" fill="#a8a8a8" aria-hidden="true"><path d="M0 0.500H10L5 5.500Z" /></svg>
              </button>
            </div>
            <span className="-ml-0.5"><LinkBadge /></span>
            <Corner className="right-[3px] bottom-1" />
          </ToolCell>
          <ToolCell className="w-[74px]"><span className="text-base font-bold text-[#0cbc32]">3336.00</span></ToolCell>
          <ToolCell className="w-[47px]"><span className="text-[11px] leading-[14px] text-[#d85060]">-10.00<br />-0.30%</span></ToolCell>
          <ToolCell className="w-[66px]"><span className="text-[11px] leading-[14px] whitespace-nowrap text-[#d85060]">B: 3335.75<br /><span className="text-[#d8c0bc]">A: 3336.00</span></span></ToolCell>
          <ToolCell className="w-10">
            <svg className="h-4 w-[18px]" viewBox="0 0 18 16" fill="none" stroke="#e0e0e0" strokeWidth="1.300" aria-label="Share"><path d="M7 2.500H1V14.500H15.500V11" /><path d="M3.500 11.500Q4 5 11 4.500V1L17.500 6.500L11 11.500V8Q6 8 3.500 11.500Z" fill="#e0e0e0" stroke="none" /></svg>
          </ToolCell>
          <ToolCell className="w-10">
            <svg className="h-4 w-[18px]" viewBox="0 0 18 16" fill="none" stroke="#e0e0e0" strokeWidth="1.300" aria-label="Notes"><path d="M9 3.500H7L6 2.500H1V13.500H15.500V10" /><path d="M1 5.500H9" /><circle cx="13.500" cy="5" r="4.500" fill="#e0e0e0" stroke="none" /><path d="M12.300 3.500H13.700V7.500M12 7.500H15" stroke="#003a59" strokeWidth="1.200" /></svg>
          </ToolCell>
          <ToolCell className="w-[39px]"><Flask /></ToolCell>
          <ToolCell className="w-10"><Gear /></ToolCell>
          <ToolCell className="w-[47px] text-xs font-bold">5m<Corner /></ToolCell>
          <ToolCell className="w-[73px]">
            <svg className="h-4 w-3.5" viewBox="0 0 14 16" fill="none" stroke="#e0e0e0" strokeWidth="1.300" aria-hidden="true"><path d="M3 2V15M10.500 0V3M10.500 12V15" /><path d="M0.500 5H5.500V12H0.500Z" fill="#e0e0e0" stroke="none" /><path d="M8 3H13V12H8Z" /></svg>
            Style
            <Corner />
          </ToolCell>
          <ToolCell className="w-[39px]"><Pointer /><Corner /></ToolCell>
          <ToolCell className="w-[88px]"><Flask />Studies<Corner /></ToolCell>
          <div className="relative flex w-[37px] items-center justify-center">
            <svg className="h-[18px] w-4" viewBox="0 0 16 18" fill="none" stroke="#e0e0e0" aria-label="Drawings"><path d="M0 1H16" strokeWidth="1.800" /><path d="M1 5V12L5.500 4.500V11L10 4.500V10L15 4.500" strokeWidth="1.300" /><path d="M0.500 17L16 10.500" strokeWidth="1.800" /></svg>
            <Corner className="right-0 bottom-[3px]" />
          </div>
          <span className="flex-1" />
          <MenuCell className="border-[#1b4f6e]" />
        </div>
        <div className="flex min-h-0 flex-1">
          <ChartPanel />
          <ActiveTrader />
          <SideTabs />
        </div>
      </div>
    </main>
  );
}

export default function App() {
  return (
    <div className="relative flex h-screen min-h-[600px] flex-col overflow-hidden bg-[#2e2e2e] px-[3px] pt-[3px] pb-1 font-['Open_Sans',sans-serif] text-[13px] leading-[18px]">
      <TopBar />
      <div className="flex min-h-0 flex-1">
        <LeftColumn />
        <Divider />
        <MainArea />
      </div>
      <div className="absolute right-0 bottom-0 z-20 flex h-[73px] w-[360px] items-center bg-black/70 pl-2 font-['Liberation_Sans',sans-serif] text-[47px] leading-none whitespace-nowrap text-white">
        Vu sur Foforum
      </div>
    </div>
  );
}
